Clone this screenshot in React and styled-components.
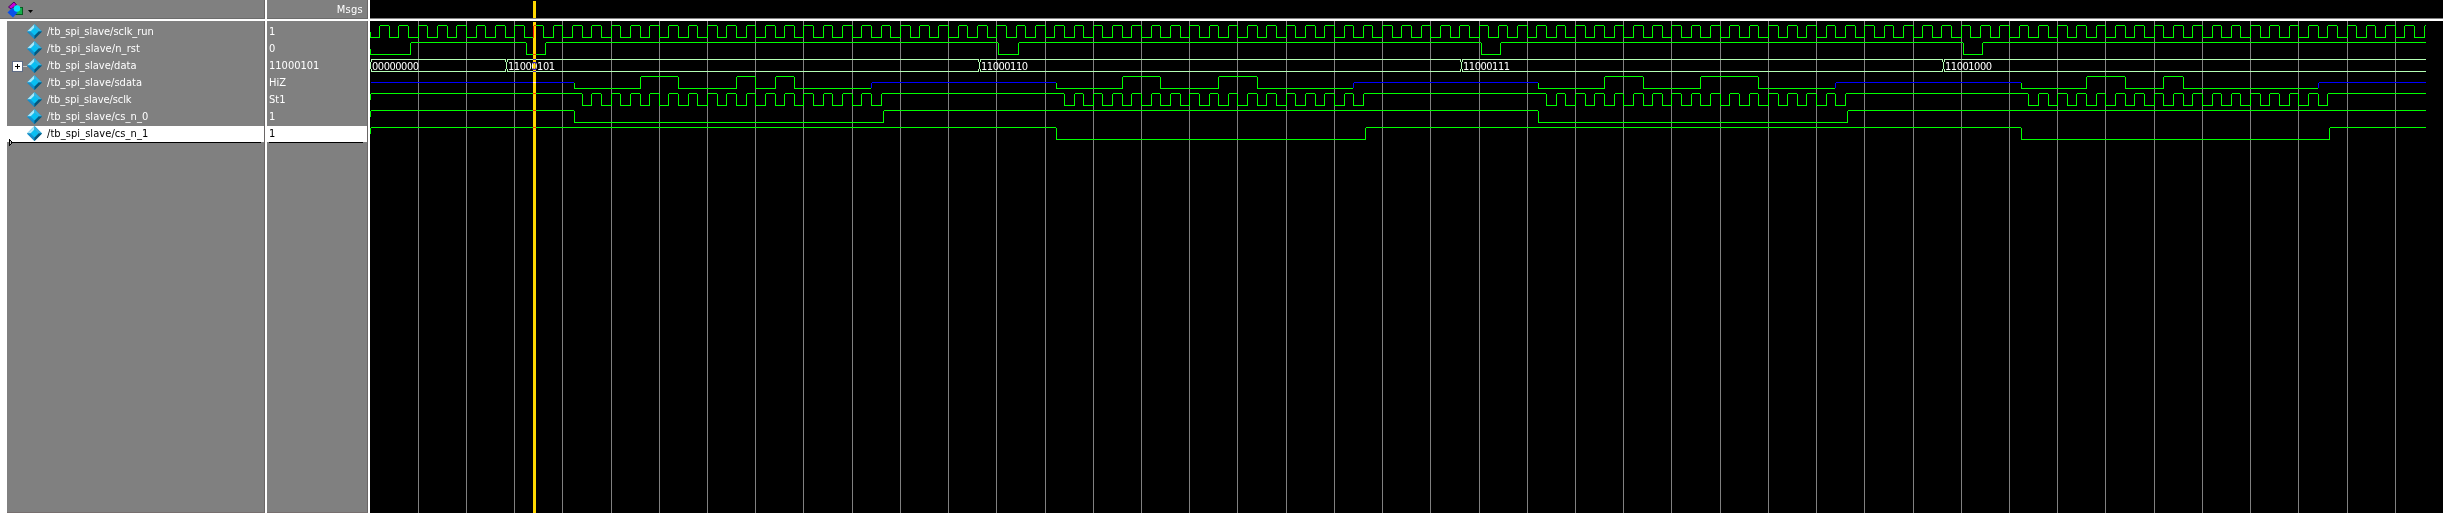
import React from "react";
import styled, { createGlobalStyle } from "styled-components";

const GlobalStyle = createGlobalStyle`
  html, body { margin: 0; padding: 0; background: #000; overflow: hidden; }
  * { box-sizing: border-box; }
`;

const FONT = '"DejaVu Sans Condensed", "DejaVu Sans", sans-serif';

const Viewer = styled.main`
  display: flex;
  width: 2443px;
  height: 513px;
  background: #fff;
  font-family: ${FONT};
  font-size: 11px;
  font-stretch: condensed;
`;

const Column = styled.section`
  display: flex;
  flex-direction: column;
  width: ${(p) => p.$width}px;
  margin-right: ${(p) => p.$gap || 0}px;
  flex-shrink: 0;
`;

const Header = styled.header`
  display: flex;
  align-items: center;
  justify-content: ${(p) => (p.$end ? "flex-end" : "flex-start")};
  height: 19px;
  margin-bottom: 2px;
  padding: 0 4px 0 7px;
  color: #fff;
  background: ${(p) => p.$bg || "#808080"};
  border-bottom: 1px solid ${(p) => (p.$bg ? "#808080" : "#6c6c6c")};
  border-right: ${(p) => (p.$bg ? "none" : "1px solid #6a6666")};
`;

const Body = styled.div`
  flex: 1;
  margin-left: ${(p) => p.$inset || 0}px;
  padding-top: 3px;
  background: #808080;
  border-right: 1px solid #6a6666;
  border-bottom: 1px solid #766f6f;
`;

const Row = styled.div`
  display: flex;
  align-items: flex-start;
  height: ${(p) => (p.$selected ? 16 : 17)}px;
  padding-left: ${(p) => p.$pad}px;
  color: ${(p) => (p.$selected ? "#000" : "#fff")};
  background: ${(p) => (p.$selected ? "#fff" : "transparent")};
`;

const Gutter = styled.span`
  display: flex;
  width: 15px;
  height: 15px;
`;

const Label = styled.span`
  line-height: 15px;
  white-space: pre;
  letter-spacing: ${(p) => p.$spacing || 0}px;
`;

const Underline = styled.div`
  position: relative;
  height: 1px;
  margin: 0 ${(p) => p.$right}px 0 ${(p) => p.$left}px;
  background: #000;
`;

const Marker = styled.svg`
  position: absolute;
  left: -3px;
  top: -3px;
`;

const Diamond = styled.svg`
  display: block;
  margin: 0 5px 0 0;
  flex-shrink: 0;
`;

const Waves = styled.svg`
  display: block;
  overflow: visible;
  background: #000;
`;

const Caption = styled.text`
  font-family: ${FONT};
  font-size: 11px;
  font-stretch: condensed;
  fill: #fff;
`;

const Cursor = styled.rect`
  fill: #ffd700;
  mix-blend-mode: difference;
`;

const signals = [
  { name: "/tb_spi_slave/sclk_run", value: "1", spacing: -0.03 },
  { name: "/tb_spi_slave/n_rst", value: "0", spacing: 0.1 },
  { name: "/tb_spi_slave/data", value: "11000101", bus: true, spacing: 0.02 },
  { name: "/tb_spi_slave/sdata", value: "HiZ", spacing: 0.04 },
  { name: "/tb_spi_slave/sclk", value: "St1", spacing: -0.08 },
  { name: "/tb_spi_slave/cs_n_0", value: "1", spacing: 0.07 },
  { name: "/tb_spi_slave/cs_n_1", value: "1", spacing: 0.07, selected: true },
];

const START = 370;
const END = 2426;
const PERIOD = 48.22;
const ORIGIN = 418.2;
const GREEN = "#00ff00";
const BLUE = "#0000ff";
const BUS = "#b4ffb4";

const box = (x1, x2, y1, y2) => `M${x1} ${y1}H${x2}V${y2}H${x1}Z`;

const gridLines = Array.from({ length: 42 }, (_, n) => Math.floor(ORIGIN + n * PERIOD));

const half = PERIOD / 5;
const edge = (k) => Math.floor(ORIGIN + k * half + 0.02);

// Two-level trace: edges alternate, beginning from the given level.
function digital(edges, level, top, from = START, to = END) {
  let d = "";
  let x = from;
  let high = level;
  [...edges, to].forEach((e, i) => {
    d += high ? box(x + 1, e, top, top + 1) : box(x, e, top + 12, top + 13);
    if (i < edges.length) d += box(e, e + 1, top + 1, top + 13);
    x = e;
    high = !high;
  });
  return d;
}

// Short vertical tick where a trace enters the view.
const entry = (y1, y2) => box(START, START + 1, y1, y2);

const runEdges = [];
for (let k = -4; edge(k) < END; k += 1) runEdges.push(edge(k));

const frameStarts = [574, 1056, 1538, 2021];
const frameEnds = [871, 1353, 1835, 2318];
const sclkEdges = [0, 50, 100, 150].flatMap((f) =>
  Array.from({ length: 32 }, (_, i) => edge(17 + f + i))
);
const bits = [
  [640, 678, 736, 755, 775, 794],
  [1122, 1160, 1218, 1257],
  [1604, 1643, 1700, 1758],
  [2086, 2125, 2163, 2183],
];
const words = [
  { x: 370, text: "00000000" },
  { x: 506, text: "11000101" },
  { x: 979, text: "11000110" },
  { x: 1461, text: "11000111" },
  { x: 1943, text: "11001000" },
];

const sdataGreen = bits
  .map(
    (b, i) =>
      digital(b, false, 76, frameStarts[i], frameEnds[i]) +
      box(frameStarts[i], frameStarts[i] + 1, 83, 89)
  )
  .join("");

const hiZ = [[START, 574], [871, 1056], [1353, 1538], [1835, 2021], [2318, END]]
  .map(([a, b], i) => box(a + 1, b, 82, 83) + (i ? box(a, a + 1, 83, 88) : ""))
  .join("");

const busPath = words
  .map((w, i) => {
    const stop = i + 1 < words.length ? words[i + 1].x - 1 : END;
    let d = box(w.x + 1, stop, 59, 60) + box(w.x + 1, stop, 71, 72);
    d += box(w.x, w.x + 1, 62, 69);
    d += box(w.x + 1, w.x + 2, 59, 62) + box(w.x + 1, w.x + 2, 69, 72);
    if (i) d += box(w.x - 1, w.x, 59, 62) + box(w.x - 1, w.x, 69, 72);
    return d;
  })
  .join("");

const traces = [
  digital(runEdges, false, 25) + entry(32, 38),
  digital([410, 526, 545, 998, 1018, 1481, 1500, 1963, 1982], false, 42) + entry(49, 55),
  sdataGreen,
  digital(sclkEdges, true, 93) + entry(94, 100),
  digital([574, 883, 1538, 1847], true, 110) + entry(111, 117),
  digital([1056, 1365, 2021, 2329], true, 127) + entry(128, 134),
];

function SignalIcon() {
  return (
    <Diamond width="15" height="15" viewBox="0 0 15 15">
      <path d="M7.5 0L15 7.5L7.5 15L0 7.5Z" fill="#087db0" />
      <path d="M7.5 0L0 7.5H4L7.5 4Z" fill="#a6e9fb" />
      <path d="M7.5 0L15 7.5H11L7.5 4Z" fill="#35b4e2" />
      <path d="M0 7.5H4L7.5 11V15Z" fill="#1690cc" />
      <path d="M15 7.5H11L7.5 11V15Z" fill="#06577c" />
      <path d="M7.5 3.5L11.5 7.5L7.5 11.5L3.5 7.5Z" fill="#08bff2" />
    </Diamond>
  );
}

function Expander() {
  return (
    <svg width="15" height="15" viewBox="0 0 15 15" shapeRendering="crispEdges">
      <rect x="0" y="3" width="11" height="11" fill="#5f6c86" />
      <rect x="1" y="4" width="9" height="9" fill="#fff" />
      <path d="M3 8H8V9H3ZM5 6H6V11H5Z" fill="#000" />
      <rect x="11" y="8" width="4" height="1" fill="#c8c8c8" />
    </svg>
  );
}

function HeaderIcon() {
  return (
    <svg width="28" height="17" viewBox="0 0 28 17">
      <path d="M1.5 6L7 1L9.5 4L4 8Z" fill="#c800d8" stroke="#4a0060" strokeWidth="1" />
      <rect x="8.5" y="6.5" width="7" height="7" fill="#16b04c" stroke="#075c20" />
      <path d="M5.5 6.5L10.5 11.5L6 16.5L0.5 11.5Z" fill="#0a50e8" />
      <circle cx="10" cy="7.5" r="3.2" fill="#00e4fc" />
      <path d="M21 9H26L23.5 12Z" fill="#000" />
    </svg>
  );
}

export default function App() {
  return (
    <>
      <GlobalStyle />
      <Viewer>
        <Column $width={265} $gap={2}>
          <Header>
            <HeaderIcon />
          </Header>
          <Body $inset={7}>
            {signals.map((s) => (
              <Row key={s.name} $pad={5} $selected={s.selected}>
                <Gutter>{s.bus && <Expander />}</Gutter>
                <SignalIcon />
                <Label $spacing={s.spacing}>{s.name}</Label>
              </Row>
            ))}
            <Underline $left={5} $right={3}>
              <Marker width="4" height="7" viewBox="0 0 4 7" shapeRendering="crispEdges">
                <path d="M0 0H1V7H0ZM1 1H2V2H1ZM2 2H3V5H2ZM1 5H2V6H1Z" fill="#000" />
                <path d="M1 2H2V5H1Z" fill="#bbb" />
              </Marker>
            </Underline>
          </Body>
        </Column>
        <Column $width={101} $gap={2}>
          <Header $end>
            <Label $spacing={0.3}>Msgs</Label>
          </Header>
          <Body>
            {signals.map((s) => (
              <Row key={s.name} $pad={2} $selected={s.selected}>
                <Label>{s.value}</Label>
              </Row>
            ))}
            <Underline $left={2} $right={4} />
          </Body>
        </Column>
        <Column $width={2073}>
          <Header $bg="#000" />
          <Waves width="2073" height="492" viewBox="370 21 2073 492" shapeRendering="crispEdges">
            <path d={gridLines.map((x) => box(x, x + 1, 21, 513)).join("")} fill="#808080" />
            {traces.map((d, i) => (
              <path key={i} d={d} fill={GREEN} />
            ))}
            <path d={hiZ} fill={BLUE} />
            <path d={busPath} fill={BUS} />
            {words.map((w) => (
              <Caption key={w.x} x={w.x + 2} y="70" textLength="47">
                {w.text}
              </Caption>
            ))}
            <Cursor x="533" y="1" width="3" height="17" />
            <Cursor x="533" y="22" width="3" height="491" />
          </Waves>
        </Column>
      </Viewer>
    </>
  );
}
